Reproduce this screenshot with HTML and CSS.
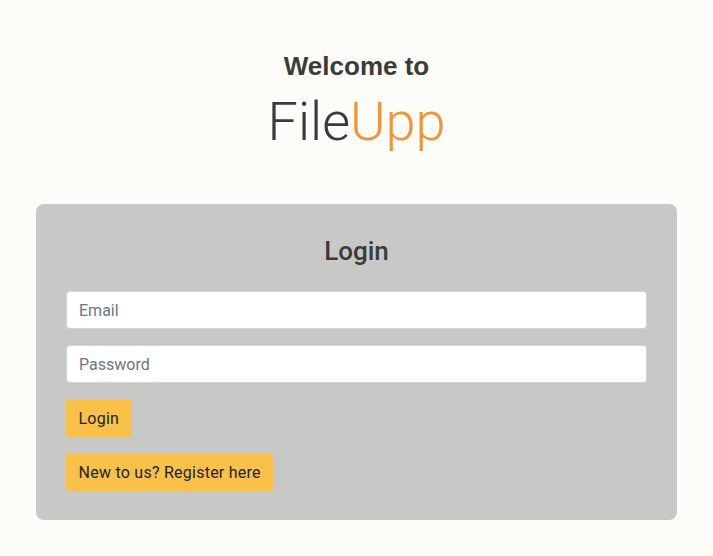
FILE: index.html
```html
<!DOCTYPE html>
<html>
<head>
<meta charset="utf-8">
<link rel="stylesheet" href="styles.css">
</head>
<body>
<div class="page">
  <header class="hero">
    <h2 class="welcome">Welcome to</h2>
    <h1 class="brand">File<span class="accent">Upp</span></h1>
  </header>
  <form class="card">
    <h3 class="card-title">Login</h3>
    <input class="field" type="email" placeholder="Email">
    <input class="field" type="password" placeholder="Password">
    <div class="actions">
      <button class="btn" type="button">Login</button>
      <button class="btn" type="button">New to us? Register here</button>
    </div>
  </form>
</div>
</body>
</html>
```
FILE: styles.css
```css
* { box-sizing: border-box; }
html, body { margin: 0; padding: 0; }
body {
  background: #fcfdf8;
  font-family: Roboto, "Liberation Sans", sans-serif;
  color: #3a3b3a;
  width: 713px;
  height: 556px;
  overflow: hidden;
}
.page { padding: 48px 36px 0; }
.hero { text-align: center; }
.welcome {
  margin: 0;
  font-family: "Liberation Sans", Arial, sans-serif;
  font-weight: 700;
  font-size: 26px;
  line-height: 36px;
  color: #3a3b3a;
}
.brand {
  margin: 6px 0 0;
  font-family: Roboto, "Liberation Sans", sans-serif;
  font-weight: 300;
  font-size: 54px;
  line-height: 64px;
  color: #3a3b3a;
}
.accent { color: #f39237; }
.card {
  margin-top: 50px;
  background: #c8c9c6;
  border-radius: 8px;
  padding: 30px 30px 29px;
  display: flex;
  flex-direction: column;
  gap: 16px;
}
.card-title {
  margin: 0 0 7px;
  text-align: center;
  font-weight: 500;
  font-size: 26px;
  line-height: 34px;
  color: #3a3b3a;
}
.field {
  height: 38px;
  width: 100%;
  border: 1px solid #ced4da;
  border-radius: 4px;
  background: #fff;
  padding: 6px 12px;
  font-family: Roboto, "Liberation Sans", sans-serif;
  font-size: 16px;
  color: #212529;
}
.field::placeholder { color: #6c757d; }
.actions {
  display: flex;
  flex-direction: column;
  align-items: flex-start;
  gap: 16px;
}
.btn {
  height: 38px;
  border: none;
  border-radius: 4px;
  background: #f9c04a;
  color: #212529;
  font-family: Roboto, "Liberation Sans", sans-serif;
  font-size: 16px;
  letter-spacing: 0.25px;
  padding: 0 12.5px;
}
```
